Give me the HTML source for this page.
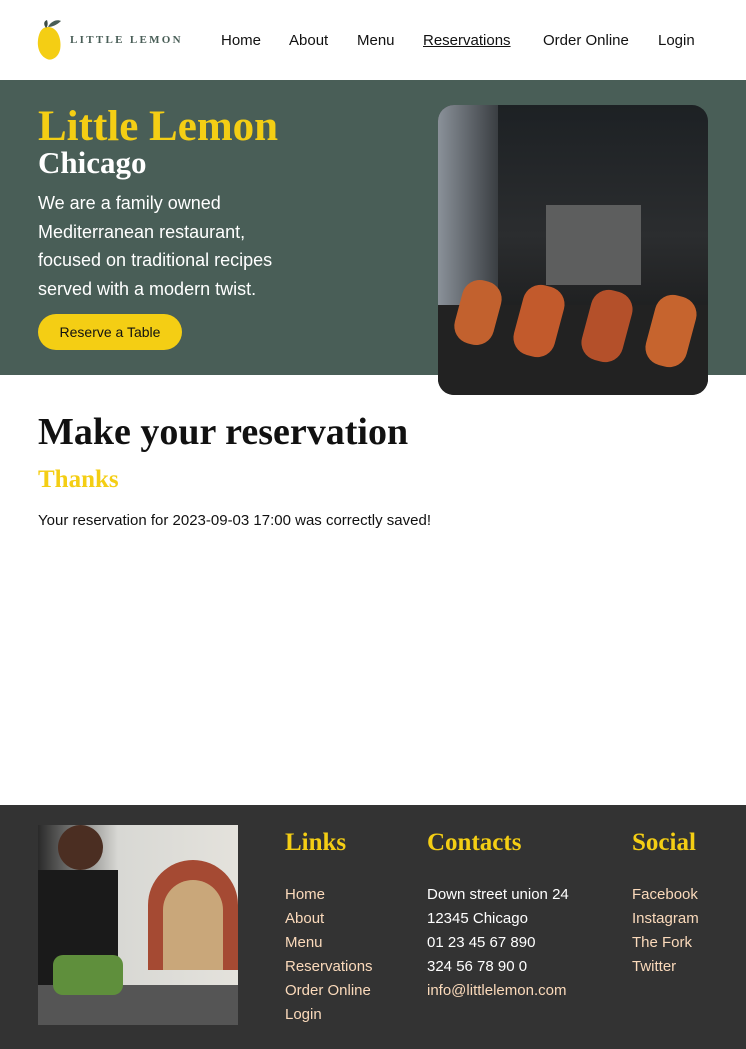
<!DOCTYPE html>
<html><head><meta charset="utf-8"><style>
*{margin:0;padding:0;box-sizing:border-box}
body{width:746px;height:1049px;overflow:hidden;font-family:"Liberation Sans",sans-serif;background:#fff;position:relative}
.abs{position:absolute}
nav a{position:absolute;top:32px;font-size:15px;color:#111;text-decoration:none}
.serif{font-family:"Liberation Serif",serif;font-weight:bold}
</style></head><body>
<svg class="abs" style="left:36px;top:18px" width="30" height="44" viewBox="0 0 30 44">
<path d="M12 9 C22 9 26 22 24 32 C22 40 15 43 11 41 C4 38 1 30 2 22 C3 14 6 9 12 9Z" fill="#f4ce14"/>
<path d="M12 9 C15 3 21 1 25 3 C21 7 16 9 12 9Z" fill="#495e57"/>
<path d="M10 10 C7 6 8 3 11 2 C12 5 12 8 10 10Z" fill="#3c4c46"/>
</svg>
<div class="abs serif" style="left:70px;top:34px;font-size:11px;letter-spacing:2.3px;color:#495e57">LITTLE LEMON</div>
<nav>
<a style="left:221px">Home</a><a style="left:289px">About</a><a style="left:357px">Menu</a>
<a style="left:423px;text-decoration:underline">Reservations</a><a style="left:543px">Order Online</a><a style="left:658px">Login</a>
</nav>
<div class="abs" style="left:0;top:80px;width:746px;height:295px;background:#495e57"></div>
<div class="abs serif" style="left:38px;top:102px;font-size:43px;color:#f4ce14">Little Lemon</div>
<div class="abs serif" style="left:38px;top:145px;font-size:31px;color:#fff">Chicago</div>
<div class="abs" style="left:38px;top:189px;font-size:18px;line-height:28.5px;color:#fff;white-space:nowrap">We are a family owned<br>Mediterranean restaurant,<br>focused on traditional recipes<br>served with a modern twist.</div>
<div class="abs" style="left:38px;top:314px;width:144px;height:36px;border-radius:18px;background:#f4ce14;font-size:14px;color:#111;text-align:center;line-height:36px">Reserve a Table</div>
<div class="abs" style="left:438px;top:105px;width:270px;height:290px;border-radius:16px;overflow:hidden;background:linear-gradient(180deg,#1d2124 0%,#2b2d2f 45%,#111 100%)">
<div class="abs" style="left:0;top:0;width:60px;height:200px;background:linear-gradient(90deg,#8a9199,#3a3e42)"></div>
<div class="abs" style="left:108px;top:100px;width:95px;height:80px;background:#5d5e5e"></div>
<div class="abs" style="left:0;top:200px;width:270px;height:90px;background:#222"></div>
<div class="abs" style="left:20px;top:175px;width:40px;height:65px;border-radius:18px;background:#c2612e;transform:rotate(15deg)"></div>
<div class="abs" style="left:80px;top:180px;width:42px;height:72px;border-radius:18px;background:#c25a2c;transform:rotate(15deg)"></div>
<div class="abs" style="left:148px;top:185px;width:42px;height:72px;border-radius:18px;background:#b4502a;transform:rotate(15deg)"></div>
<div class="abs" style="left:212px;top:190px;width:42px;height:72px;border-radius:18px;background:#c6642e;transform:rotate(15deg)"></div>
</div>
<div class="abs serif" style="left:38px;top:410px;font-size:38px;color:#111">Make your reservation</div>
<div class="abs serif" style="left:38px;top:466px;font-size:25px;color:#f4ce14">Thanks</div>
<div class="abs" style="left:38px;top:512px;font-size:15px;color:#111">Your reservation for 2023-09-03 17:00 was correctly saved!</div>
<div class="abs" style="left:0;top:805px;width:746px;height:244px;background:#333"></div>
<div class="abs" style="left:38px;top:825px;width:200px;height:200px;overflow:hidden;background:linear-gradient(90deg,#2a2a2a 0%,#d8d8d4 40%,#e4e2dc 100%)">
<div class="abs" style="left:110px;top:35px;width:90px;height:110px;border-radius:45px 45px 0 0;background:#a54a33"></div>
<div class="abs" style="left:125px;top:55px;width:60px;height:90px;border-radius:30px 30px 0 0;background:#c9a77a"></div>
<div class="abs" style="left:20px;top:0;width:45px;height:45px;border-radius:50%;background:#4b2e22"></div>
<div class="abs" style="left:0;top:45px;width:80px;height:155px;background:#1a1a1a"></div>
<div class="abs" style="left:0;top:160px;width:200px;height:40px;background:#555"></div>
<div class="abs" style="left:15px;top:130px;width:70px;height:40px;background:#5f8f3c;border-radius:10px"></div>
</div>
<div class="abs serif" style="left:285px;top:829px;font-size:25px;color:#f4ce14">Links</div>
<div class="abs serif" style="left:427px;top:829px;font-size:25px;color:#f4ce14">Contacts</div>
<div class="abs serif" style="left:632px;top:829px;font-size:25px;color:#f4ce14">Social</div>
<div class="abs" style="left:285px;top:883px;font-size:15px;line-height:24px;color:#fbdabb">Home<br>About<br>Menu<br>Reservations<br>Order Online<br>Login</div>
<div class="abs" style="left:427px;top:883px;font-size:15px;line-height:24px;color:#fff">Down street union 24<br>12345 Chicago<br>01 23 45 67 890<br>324 56 78 90 0<br><span style="color:#fbdabb">info@littlelemon.com</span></div>
<div class="abs" style="left:632px;top:883px;font-size:15px;line-height:24px;color:#fbdabb">Facebook<br>Instagram<br>The Fork<br>Twitter</div>
</body></html>
